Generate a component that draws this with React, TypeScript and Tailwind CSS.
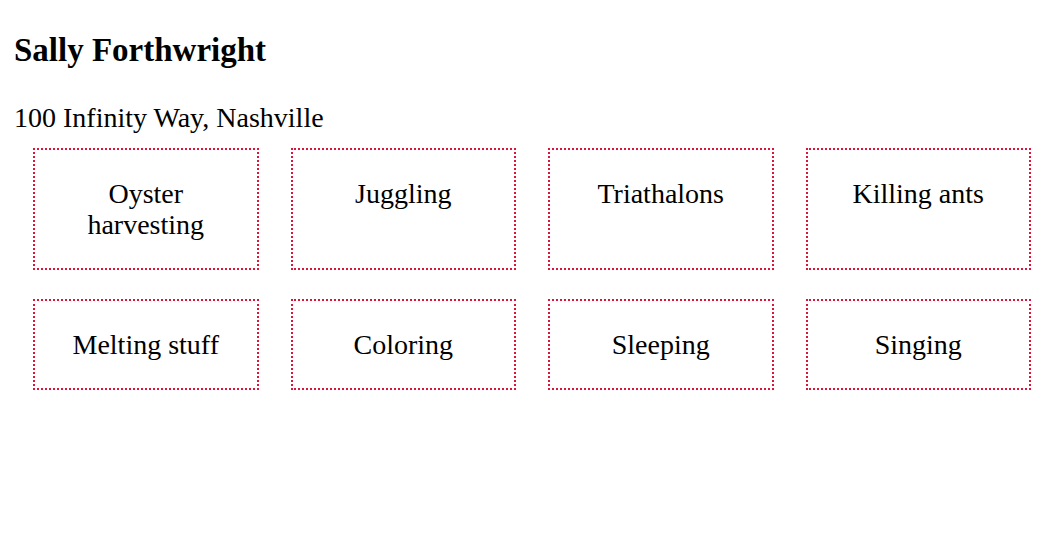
const hobbies = [
  'Oyster harvesting',
  'Juggling',
  'Triathalons',
  'Killing ants',
  'Melting stuff',
  'Coloring',
  'Sleeping',
  'Singing',
];

const App = () => {
  return (
    <div className="min-h-screen bg-white text-black font-['Liberation_Serif','Times_New_Roman',serif]">
      <div className="px-[14px] pt-[32px]">
        <h1 className="text-[33px] font-bold leading-[37px]">Sally Forthwright</h1>
        <p className="mt-[33px] text-[28px] leading-[32px]">100 Infinity Way, Nashville</p>
      </div>

      {/* Hobbies grid */}
      <div className="mt-[14px] pl-[33px] pr-[32px] grid grid-cols-4 gap-x-[32px] gap-y-[29px]">
        {hobbies.map((hobby) => (
          <div
            key={hobby}
            className="border-2 border-dotted border-[#dc143c] px-[24px] py-[28px] text-center text-[28px] leading-[31px]"
          >
            {hobby}
          </div>
        ))}
      </div>
    </div>
  );
};

export default App;
